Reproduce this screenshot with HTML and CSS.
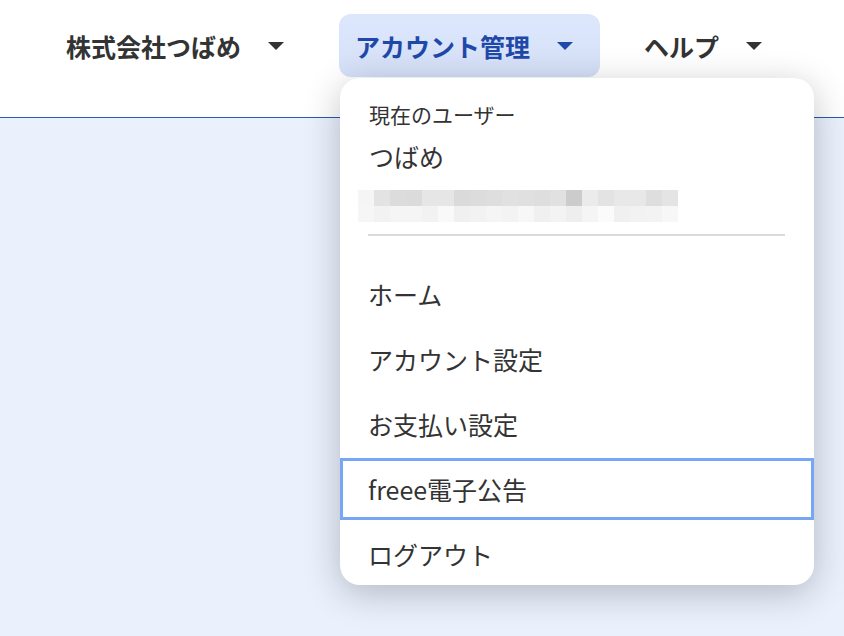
FILE: index.html
```html
<!DOCTYPE html>
<html lang="ja">
<head>
    <meta charset="UTF-8">
    <meta name="viewport" content="width=device-width, initial-scale=1.0">
    <title>アカウント管理</title>
    <link rel="stylesheet" href="styles.css">
</head>
<body>

    <header class="top-bar">
        <nav class="nav">
            <div class="nav-item">
                <button class="nav-button">株式会社つばめ<span class="caret"></span></button>
            </div>
            <div class="nav-item">
                <button class="nav-button is-open">アカウント管理<span class="caret"></span></button>

                <!-- アカウントメニュー -->
                <div class="dropdown">
                    <div class="user-info">
                        <div class="user-label">現在のユーザー</div>
                        <div class="user-name">つばめ</div>
                        <div class="user-mail"></div>
                    </div>
                    <hr class="divider">
                    <ul class="menu">
                        <li><a href="#">ホーム</a></li>
                        <li><a href="#">アカウント設定</a></li>
                        <li><a href="#">お支払い設定</a></li>
                        <li><a href="#" class="is-focused">freee電子公告</a></li>
                        <li><a href="#">ログアウト</a></li>
                    </ul>
                </div>
            </div>
            <div class="nav-item">
                <button class="nav-button">ヘルプ<span class="caret"></span></button>
            </div>
        </nav>
    </header>

    <main class="content"></main>

</body>
</html>
```

FILE: styles.css
```css
* { box-sizing: border-box; }
html, body { height: 100%; }
body { margin: 0; font-family: "Noto Sans CJK JP", "Noto Sans", sans-serif; color: #333; background-color: #eaf1fd; display: flex; flex-direction: column; }

.top-bar { background-color: #fff; height: 118px; border-bottom: 1px solid #2c57b6; padding-top: 14px; }
.nav { display: flex; gap: 28px; padding-left: 50px; }
.nav-item { position: relative; }
.nav-button { display: flex; align-items: center; gap: 27px; height: 63px; padding: 0 27px 0 16px; border: none; border-radius: 12px; background: none; font-family: inherit; font-size: 25px; font-weight: bold; color: #333; cursor: pointer; }
.nav-button.is-open { background: linear-gradient(#dde7fc, #d5e0f8); color: #1f49a8; }
.caret { width: 0; height: 0; border-left: 8px solid transparent; border-right: 8px solid transparent; border-top: 8px solid currentColor; }

.dropdown { position: absolute; left: 1px; top: 64px; width: 474px; background-color: #fff; border-radius: 20px; box-shadow: 0 8px 36px rgba(0, 0, 0, 0.24); overflow: hidden; z-index: 10; }
.user-info { padding: 22px 29px 0; }
.user-label { font-size: 21px; line-height: 28px; }
.user-name { font-size: 25px; line-height: 34px; margin-top: 11px; }
.user-mail { width: 320px; height: 32px; margin: 17px 0 0 -11px;
    background:
        linear-gradient(to right, #f5f5f5 0 16px, #e3e3e3 16px 32px, #dcdcdc 32px 48px, #dbdbdb 48px 64px, #e6e6e6 64px 96px, #dadada 96px 112px, #dcdcdc 112px 128px, #dedede 128px 144px, #e1e1e1 144px 160px, #e0e0e0 160px 176px, #dedede 176px 192px, #e1e1e1 192px 208px, #cccccc 208px 224px, #ebebeb 224px 240px, #e3e3e3 240px 256px, #e8e8e8 256px 288px, #dedede 288px 304px, #e4e4e4 304px 320px) top / 100% 16px no-repeat,
        linear-gradient(to right, #f6f6f6 0 16px, #f2f2f2 16px 32px, #f5f5f5 32px 64px, #f2f2f2 64px 80px, #f9f9f9 80px 96px, #f0f0f0 96px 112px, #f2f2f2 112px 128px, #f5f5f5 128px 144px, #f3f3f3 144px 160px, #f7f7f7 160px 176px, #f0f0f0 176px 192px, #f3f3f3 192px 208px, #eeeeee 208px 224px, #f5f5f5 224px 240px, #fbfbfb 240px 256px, #f0f0f0 256px 272px, #f2f2f2 272px 288px, #f3f3f3 288px 304px, #f7f7f7 304px 320px) bottom / 100% 16px no-repeat; }
.divider { margin: 12px 29px 0 28px; border: none; height: 2px; background-color: #dcdadc; }

.menu { list-style: none; margin: 27px 0 0; padding: 0; display: flex; flex-direction: column; gap: 3px; }
.menu a { display: flex; align-items: center; height: 62px; padding: 0 28px; font-size: 25px; color: #333; text-decoration: none; }
.menu a.is-focused { box-shadow: inset 0 0 0 3px #78a6f7; }

.content { flex: 1; }
```
